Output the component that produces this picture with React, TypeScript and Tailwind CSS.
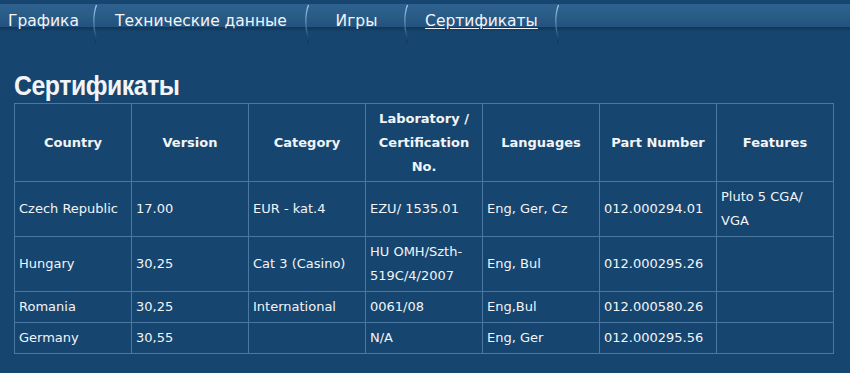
import React from "react";

type Row = {
  country: string;
  version: string;
  category: string;
  lab: string[];
  languages: string;
  part: string;
  features: string[];
};

const rows: Row[] = [
  {
    country: "Czech Republic",
    version: "17.00",
    category: "EUR - kat.4",
    lab: ["EZU/ 1535.01"],
    languages: "Eng, Ger, Cz",
    part: "012.000294.01",
    features: ["Pluto 5 CGA/", "VGA"],
  },
  {
    country: "Hungary",
    version: "30,25",
    category: "Cat 3 (Casino)",
    lab: ["HU OMH/Szth-", "519C/4/2007"],
    languages: "Eng, Bul",
    part: "012.000295.26",
    features: [],
  },
  {
    country: "Romania",
    version: "30,25",
    category: "International",
    lab: ["0061/08"],
    languages: "Eng,Bul",
    part: "012.000580.26",
    features: [],
  },
  {
    country: "Germany",
    version: "30,55",
    category: "",
    lab: ["N/A"],
    languages: "Eng, Ger",
    part: "012.000295.56",
    features: [],
  },
];

const tabs = [
  { label: "Графика", w: "w-[95px]", align: "justify-start pl-2" },
  { label: "Технические данные", w: "w-[212px]", align: "justify-center" },
  { label: "Игры", w: "w-[99px]", align: "justify-center" },
  { label: "Сертификаты", w: "w-[151px]", align: "justify-center", active: true },
];

const Separator = () => (
  <svg width="8" height="40" viewBox="0 0 8 40" className="shrink-0 -mx-1 self-start">
    <defs>
      <linearGradient id="sepg" x1="0" y1="0" x2="0" y2="1">
        <stop offset="0" stopColor="#a6cbea" />
        <stop offset="0.5" stopColor="#5485b3" />
        <stop offset="1" stopColor="#0f2f4f" />
      </linearGradient>
    </defs>
    <path d="M5.5 1 C2 10, 2 24, 5 33 L4.5 39" stroke="url(#sepg)" strokeWidth="1.3" fill="none" />
  </svg>
);

const cell = "border border-[#4a78a3] pl-1 pr-1 py-[3px] align-middle";
const head = "border border-[#4a78a3] px-1 pt-[3px] pb-[2px] align-middle";

export default function App() {
  return (
    <div className="w-[850px] h-[373px] bg-[#16466f] text-[#f2f4f7] overflow-hidden">
      {/* tab bar */}
      <div className="pt-1">
        <div className="relative h-[23px] bg-gradient-to-b from-[#2f6190] via-[#2a5c88] to-[#22527d]">
          <div className="absolute left-0 right-0 -bottom-[5px] h-[5px] bg-gradient-to-b from-[#113658] to-[#16466f]" />
          <div className="relative flex items-start h-full font-['DejaVu_Sans',sans-serif] text-[15.5px] leading-[16px]">
            {tabs.map((t) => (
              <React.Fragment key={t.label}>
                <div className={`${t.w} pt-[9px] flex items-start ${t.align}`}>
                  <span className={t.active ? "underline underline-offset-2" : ""}>{t.label}</span>
                </div>
                <Separator />
              </React.Fragment>
            ))}
          </div>
        </div>
      </div>

      <h1 className="mt-[44px] ml-[14px] w-fit origin-left scale-x-[0.92] font-['Liberation_Sans',sans-serif] font-bold text-[27px] leading-[30px] tracking-[-0.5px]">
        Сертификаты
      </h1>

      <table className="ml-[14px] mt-[2px] w-[820px] table-fixed border-collapse border border-[#4a78a3] font-['DejaVu_Sans',sans-serif] text-[13px] leading-[24px]">
        <thead>
          <tr className="font-bold text-center">
            <th className={head}>Country</th>
            <th className={head}>Version</th>
            <th className={head}>Category</th>
            <th className={head}>
              Laboratory /
              <br />
              Certification
              <br />
              No.
            </th>
            <th className={head}>Languages</th>
            <th className={head}>Part Number</th>
            <th className={head}>Features</th>
          </tr>
        </thead>
        <tbody>
          {rows.map((r) => (
            <tr key={r.country}>
              <td className={cell}>{r.country}</td>
              <td className={cell}>{r.version}</td>
              <td className={cell}>{r.category}</td>
              <td className={cell}>
                {r.lab.map((l, i) => (
                  <div key={i}>{l}</div>
                ))}
              </td>
              <td className={cell}>{r.languages}</td>
              <td className={cell}>{r.part}</td>
              <td className={cell}>
                {r.features.map((f, i) => (
                  <div key={i}>{f}</div>
                ))}
              </td>
            </tr>
          ))}
        </tbody>
      </table>
    </div>
  );
}
